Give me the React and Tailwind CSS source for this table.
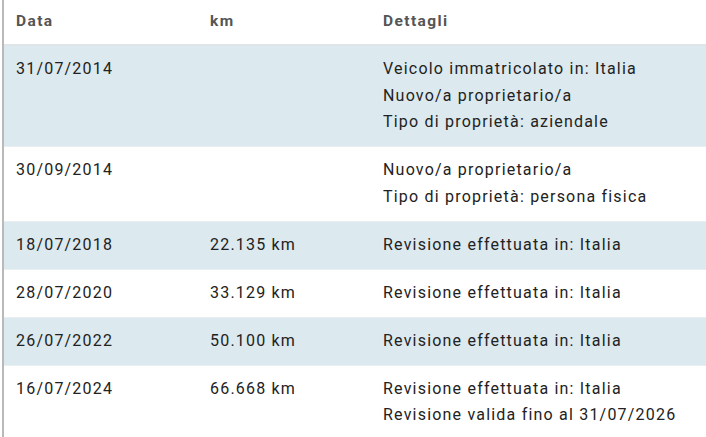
const rows = [
  { date: '31/07/2014', km: '', details: ['Veicolo immatricolato in: Italia', 'Nuovo/a proprietario/a', 'Tipo di proprietà: aziendale'] },
  { date: '30/09/2014', km: '', details: ['Nuovo/a proprietario/a', 'Tipo di proprietà: persona fisica'] },
  { date: '18/07/2018', km: '22.135 km', details: ['Revisione effettuata in: Italia'] },
  { date: '28/07/2020', km: '33.129 km', details: ['Revisione effettuata in: Italia'] },
  { date: '26/07/2022', km: '50.100 km', details: ['Revisione effettuata in: Italia'] },
  { date: '16/07/2024', km: '66.668 km', details: ['Revisione effettuata in: Italia', 'Revisione valida fino al 31/07/2026'] },
];

export default function App() {
  return (
    <div className="h-[437px] w-[706px] overflow-hidden bg-white font-['Roboto',sans-serif]">
      <div className="ml-[2px] h-full border-l-2 border-[#b9b9b9]">
        {/* Header */}
        <div className="flex h-[46px] items-center border-b-2 border-[#dfe5e7] text-[15.5px] font-bold tracking-[1.4px] text-[#555]">
          <div className="w-[194px] shrink-0 pl-3">Data</div>
          <div className="w-[173px] shrink-0 pl-3">km</div>
          <div className="flex-1 pl-3">Dettagli</div>
        </div>

        {/* Rows */}
        {rows.map((row, i) => (
          <div
            key={row.date}
            className={`flex border-b border-[#e9eef0] pt-[10px] pb-[10.5px] text-[16px] leading-[26.5px] tracking-[1.2px] text-[#222] ${i % 2 === 0 ? 'bg-[#dce9ee]' : 'bg-white'}`}
          >
            <div className="w-[194px] shrink-0 pl-3">{row.date}</div>
            <div className="w-[173px] shrink-0 pl-3">{row.km}</div>
            <div className="flex-1 pl-3">
              {row.details.map((d) => (
                <div key={d}>{d}</div>
              ))}
            </div>
          </div>
        ))}
      </div>
    </div>
  );
}
